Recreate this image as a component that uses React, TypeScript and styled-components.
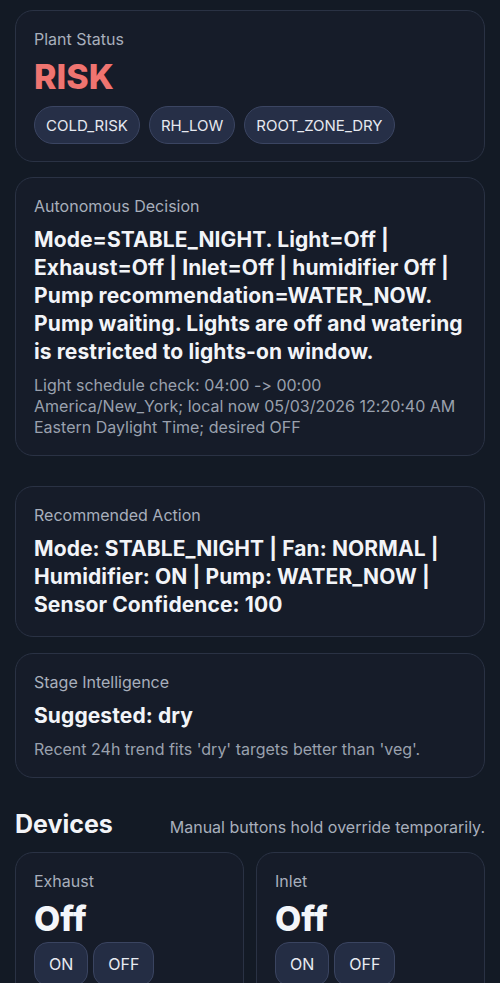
import React from "react";
import styled, { createGlobalStyle } from "styled-components";

const Global = createGlobalStyle`
  html, body { margin: 0; padding: 0; background: #131a25; }
  body {
    font-family: Inter, "Noto Sans", "Liberation Sans", sans-serif;
    font-variant-ligatures: none;
    font-feature-settings: "calt" 0, "liga" 0;
    color: #eef1f6;
    -webkit-font-smoothing: antialiased;
  }
  * { box-sizing: border-box; }
`;

const Page = styled.div`
  padding: 10px 15px 20px;
  display: flex;
  flex-direction: column;
`;

const Card = styled.section<{ $gapAfter?: number }>`
  background: #161c29;
  border: 1px solid #2a3244;
  border-radius: 18px;
  padding: 18px 18px 17px;
  margin-bottom: ${(p) => p.$gapAfter ?? 15}px;
  display: flex;
  flex-direction: column;
`;

const Label = styled.div`
  font-size: 16px;
  line-height: 20px;
  color: #a8afbc;
`;

const Status = styled.div`
  margin-top: 9px;
  font-size: 34px;
  line-height: 38px;
  font-weight: 800;
  color: #ef7470;
`;

const Chips = styled.div`
  margin-top: 10px;
  display: flex;
  gap: 9px;
  flex-wrap: wrap;
`;

const Chip = styled.span`
  height: 38px;
  padding: 0 11px;
  border-radius: 19px;
  background: #262f47;
  border: 1px solid #3b4562;
  color: #e6e9f0;
  font-size: 15px;
  display: inline-flex;
  align-items: center;
`;

const Value = styled.div`
  margin-top: 10px;
  font-size: 21px;
  line-height: 28px;
  font-weight: 700;
  letter-spacing: 0.1px;
  color: #f2f4f8;
`;

const Detail = styled.div`
  margin-top: 9px;
  font-size: 16px;
  line-height: 21px;
  color: #9aa1ae;
`;

const SectionHead = styled.div`
  display: flex;
  justify-content: space-between;
  align-items: baseline;
  margin: 30px 0 12px;
`;

const SectionTitle = styled.h2`
  margin: 0;
  font-size: 25px;
  line-height: 32px;
  font-weight: 700;
  color: #f2f4f8;
`;

const SectionNote = styled.span`
  font-size: 16px;
  color: #a8afbc;
`;

const DeviceGrid = styled.div`
  display: grid;
  grid-template-columns: 1fr 1fr;
  gap: 12px;
`;

const DeviceCard = styled(Card)`
  margin-bottom: 0;
`;

const DeviceState = styled.div`
  margin-top: 8px;
  font-size: 34px;
  line-height: 40px;
  font-weight: 800;
  color: #f4f6fa;
`;

const Buttons = styled.div`
  margin-top: 3px;
  display: flex;
  gap: 5px;
`;

const Btn = styled.button`
  height: 44px;
  padding: 0 14px;
  border-radius: 14px;
  background: #242d44;
  border: 1px solid #3a4460;
  color: #e8ebf2;
  font-family: inherit;
  font-size: 16px;
`;

const devices = ["Exhaust", "Inlet"];

export default function App() {
  return (
    <>
      <Global />
      <Page>
        <Card>
          <Label>Plant Status</Label>
          <Status>RISK</Status>
          <Chips>
            <Chip>COLD_RISK</Chip>
            <Chip>RH_LOW</Chip>
            <Chip>ROOT_ZONE_DRY</Chip>
          </Chips>
        </Card>
        <Card $gapAfter={30}>
          <Label>Autonomous Decision</Label>
          <Value>
            Mode=STABLE_NIGHT. Light=Off | Exhaust=Off | Inlet=Off | humidifier Off | Pump
            recommendation=WATER_NOW. Pump waiting. Lights are off and watering is restricted to
            lights-on window.
          </Value>
          <Detail>
            Light schedule check: 04:00 -&gt; 00:00 America/New_York; local now 05/03/2026 12:20:40 AM
            Eastern Daylight Time; desired OFF
          </Detail>
        </Card>
        <Card $gapAfter={16}>
          <Label>Recommended Action</Label>
          <Value>
            Mode: STABLE_NIGHT | Fan: NORMAL | Humidifier: ON | Pump: WATER_NOW | Sensor Confidence: 100
          </Value>
        </Card>
        <Card $gapAfter={0}>
          <Label>Stage Intelligence</Label>
          <Value>Suggested: dry</Value>
          <Detail>Recent 24h trend fits 'dry' targets better than 'veg'.</Detail>
        </Card>
        <SectionHead>
          <SectionTitle>Devices</SectionTitle>
          <SectionNote>Manual buttons hold override temporarily.</SectionNote>
        </SectionHead>
        <DeviceGrid>
          {devices.map((d) => (
            <DeviceCard key={d}>
              <Label>{d}</Label>
              <DeviceState>Off</DeviceState>
              <Buttons>
                <Btn>ON</Btn>
                <Btn>OFF</Btn>
              </Buttons>
            </DeviceCard>
          ))}
        </DeviceGrid>
      </Page>
    </>
  );
}
